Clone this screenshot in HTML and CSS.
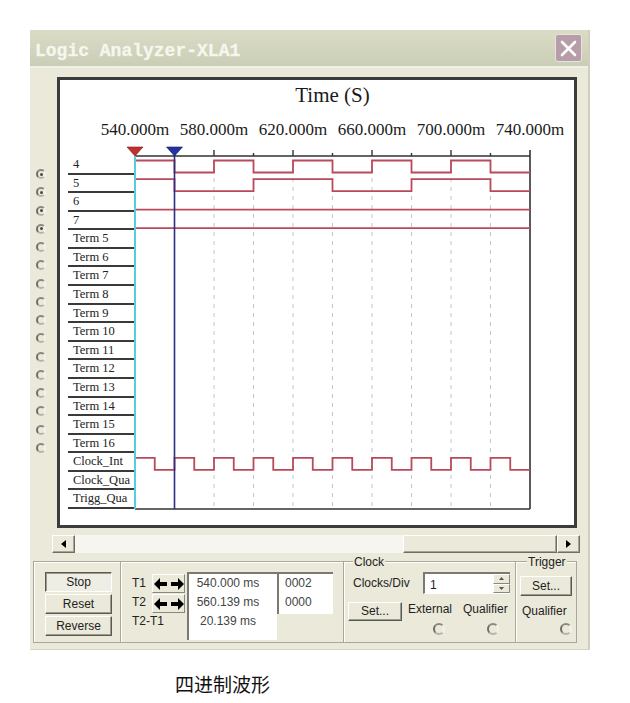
FILE: index.html
```html
<!DOCTYPE html>
<html>
<head>
<meta charset="utf-8">
<title>Logic Analyzer-XLA1</title>
<link rel="stylesheet" href="styles.css">
</head>
<body>
<div class="window">
  <div class="titlebar">
    <span class="title">Logic Analyzer-XLA1</span>
    <div class="close">
      <svg width="17" height="17" viewBox="0 0 17 17"><path d="M2 2 L15 15 M15 2 L2 15" stroke="#fff" stroke-width="2.6" stroke-linecap="round"/></svg>
    </div>
  </div>
  <div class="main">
    <div class="radios">
      <span class="radio on"></span><span class="radio on"></span><span class="radio on"></span><span class="radio on"></span>
      <span class="radio"></span><span class="radio"></span><span class="radio"></span><span class="radio"></span>
      <span class="radio"></span><span class="radio"></span><span class="radio"></span><span class="radio"></span>
      <span class="radio"></span><span class="radio"></span><span class="radio"></span><span class="radio"></span>
    </div>
    <div class="plot">
      <div class="plot-title">Time (S)</div>
      <div class="axis-labels">
        <span>540.000m</span><span>580.000m</span><span>620.000m</span><span>660.000m</span><span>700.000m</span><span>740.000m</span>
      </div>
      <div class="chart">
        <div class="labels">
          <div class="row">4</div><div class="row">5</div><div class="row">6</div><div class="row">7</div>
          <div class="row">Term 5</div><div class="row">Term 6</div><div class="row">Term 7</div><div class="row">Term 8</div>
          <div class="row">Term 9</div><div class="row">Term 10</div><div class="row">Term 11</div><div class="row">Term 12</div>
          <div class="row">Term 13</div><div class="row">Term 14</div><div class="row">Term 15</div><div class="row">Term 16</div>
          <div class="row">Clock_Int</div><div class="row">Clock_Qua</div><div class="row">Trigg_Qua</div>
        </div>
        <svg class="waves" width="439" height="372" viewBox="0 0 439 372">
          <g class="grid">
            <path d="M39.5 20 V369 M79 20 V369 M118.5 20 V369 M158 20 V369 M197.5 20 V369 M237 20 V369 M276.5 20 V369 M316 20 V369 M355.5 20 V369"/>
          </g>
          <g class="axis">
            <path d="M0 16 H395 M395 10 V369 M0 369 H395"/>
            <path class="tick" d="M79 10 V16 M158 10 V16 M237 10 V16 M316 10 V16 M39.5 13 V16 M118.5 13 V16 M197.5 13 V16 M276.5 13 V16 M355.5 13 V16"/>
          </g>
          <g class="sig">
            <path d="M0 20.5 H39.5 V32.5 H79 V20.5 H118.5 V32.5 H158 V20.5 H197.5 V32.5 H237 V20.5 H276.5 V32.5 H316 V20.5 H355.5 V32.5 H395"/>
            <path d="M0 39.1 H39.5 V51.1 H118.5 V39.1 H197.5 V51.1 H276.5 V39.1 H355.5 V51.1 H395"/>
            <path d="M0 69.7 H395"/>
            <path d="M0 88.2 H395"/>
            <path d="M0 317.8 H19.75 V329.8 H39.5 V317.8 H59.25 V329.8 H79 V317.8 H98.75 V329.8 H118.5 V317.8 H138.25 V329.8 H158 V317.8 H177.75 V329.8 H197.5 V317.8 H217.25 V329.8 H237 V317.8 H256.75 V329.8 H276.5 V317.8 H296.25 V329.8 H316 V317.8 H335.75 V329.8 H355.5 V317.8 H375.25 V329.8 H395"/>
          </g>
          <path class="t1" d="M0 16 V369"/>
          <path class="t2" d="M39.5 9 V369"/>
          <polygon class="tri1" points="-8,7 8,7 0,16"/>
          <polygon class="tri2" points="31.5,7 47.5,7 39.5,16"/>
        </svg>
      </div>
    </div>
  </div>
  <div class="hscroll">
    <div class="sbtn"><svg width="5" height="8" viewBox="0 0 5 8"><polygon points="5,0 5,8 0,4" fill="#000"/></svg></div>
    <div class="strack"></div>
    <div class="sthumb"></div>
    <div class="sbtn"><svg width="5" height="8" viewBox="0 0 5 8"><polygon points="0,0 0,8 5,4" fill="#000"/></svg></div>
  </div>
  <div class="controls">
    <div class="group g-buttons">
      <div class="btn pressed">Stop</div>
      <div class="btn">Reset</div>
      <div class="btn">Reverse</div>
    </div>
    <div class="group g-time">
      <div class="tlabels">
        <div class="trow">T1</div>
        <div class="trow">T2</div>
        <div class="trow">T2-T1</div>
      </div>
      <div class="tarrows">
        <div class="abtn"><svg width="30" height="12" viewBox="0 0 30 12"><polygon points="0,6 6,0 6,4 13,4 13,8 6,8 6,12"/><polygon points="30,6 24,0 24,4 17,4 17,8 24,8 24,12"/></svg></div>
        <div class="abtn"><svg width="30" height="12" viewBox="0 0 30 12"><polygon points="0,6 6,0 6,4 13,4 13,8 6,8 6,12"/><polygon points="30,6 24,0 24,4 17,4 17,8 24,8 24,12"/></svg></div>
      </div>
      <div class="tbox tbox1">
        <div class="trow">540.000 ms</div>
        <div class="trow">560.139 ms</div>
        <div class="trow">20.139 ms</div>
      </div>
      <div class="tbox tbox2">
        <div class="trow">0002</div>
        <div class="trow">0000</div>
      </div>
    </div>
    <div class="group g-clock">
      <span class="legend">Clock</span>
      <div class="clk-row">
        <span class="clk-label">Clocks/Div</span>
        <div class="spin">
          <span class="spin-val">1</span>
          <div class="spin-btns">
            <div class="sp"><svg width="5" height="3" viewBox="0 0 5 3"><polygon points="0,3 5,3 2.5,0" fill="#555"/></svg></div>
            <div class="sp"><svg width="5" height="3" viewBox="0 0 5 3"><polygon points="0,0 5,0 2.5,3" fill="#555"/></svg></div>
          </div>
        </div>
      </div>
      <div class="clk-row2">
        <div class="btn set">Set...</div>
        <div class="opt opt-ext">
          <span>External</span>
          <span class="radio big"></span>
        </div>
        <div class="opt opt-qual">
          <span>Qualifier</span>
          <span class="radio big"></span>
        </div>
      </div>
    </div>
    <div class="group g-trig">
      <span class="legend">Trigger</span>
      <div class="btn set trig-set">Set...</div>
      <span class="trig-q">Qualifier</span>
      <span class="radio big trig-radio"></span>
    </div>
  </div>
</div>
<div class="caption">四进制波形</div>
</body>
</html>
```
FILE: styles.css
```css
* { box-sizing: border-box; }

body {
  margin: 0;
  background: #ffffff;
  font-family: "Liberation Sans", Arial, sans-serif;
}

.window {
  width: 560px;
  height: 620px;
  margin: 30px 0 0 30px;
  background: #ebe9da;
  border-right: 2px solid #d0cebf;
  border-bottom: 1px solid #d6d4c6;
  display: flex;
  flex-direction: column;
}

.titlebar {
  height: 38px;
  flex: none;
  display: flex;
  align-items: center;
  justify-content: space-between;
  padding: 0 6px 0 5px;
  background: linear-gradient(#dadcc6, #cbceb6);
  border-bottom: 2px solid #f1f0e6;
}

.title {
  font-family: "Liberation Mono", "DejaVu Sans Mono", monospace;
  font-weight: 700;
  font-size: 18px;
  color: #f8f8f0;
  padding-top: 5px;
  -webkit-text-stroke: 0.5px #f3f3ea;
  text-shadow: 0 0 1px #bfc1a8;
}

.close {
  width: 27px;
  height: 28px;
  background: #b69da8;
  border: 1px solid #e9e2e4;
  border-radius: 3px;
  display: flex;
  align-items: center;
  justify-content: center;
}

.main {
  display: flex;
  padding-top: 9px;
}

.radios {
  width: 27px;
  padding: 88px 0 0 6px;
  display: grid;
  grid-auto-rows: 18.25px;
  align-content: start;
}

.radio {
  display: block;
  width: 10px;
  height: 10px;
  align-self: center;
  border-radius: 50%;
  border: 2px solid;
  border-color: #8a8a82 #f2f1ea #b4b4aa #6e6e66;
  position: relative;
}

.radio.on::after {
  content: "";
  position: absolute;
  left: 1.5px;
  top: 1.5px;
  width: 3px;
  height: 3px;
  border-radius: 50%;
  background: #4a4a4a;
}

.radio.big {
  width: 12px;
  height: 12px;
}

.plot {
  width: 520px;
  height: 451px;
  border: 3px solid #3c3c3c;
  background: #ffffff;
  font-family: "Liberation Serif", "Times New Roman", serif;
  color: #1a1a1a;
}

.plot-title {
  margin: 3px 0 0 75px;
  width: 395px;
  text-align: center;
  font-size: 21px;
  line-height: 24px;
}

.axis-labels {
  display: flex;
  margin: 13px 0 0 35.5px;
  font-size: 17px;
  line-height: 20px;
}

.axis-labels span {
  width: 79px;
  text-align: center;
  flex: none;
}

.chart {
  display: flex;
}

.labels {
  width: 75px;
  flex: none;
  padding: 16px 0 0 8px;
  display: grid;
  grid-template-rows: repeat(19, 18.58px);
}

.row {
  border-bottom: 2px solid #3a3a3a;
  font-size: 12.5px;
  line-height: 16.5px;
  padding-left: 5px;
  white-space: nowrap;
  overflow: hidden;
  color: #222;
}

.waves {
  overflow: visible;
  display: block;
}

.grid path {
  stroke: #c4c4c4;
  stroke-width: 1;
  stroke-dasharray: 4 5;
  fill: none;
}

.axis path {
  stroke: #333;
  stroke-width: 1.6;
  fill: none;
}

.axis .tick {
  stroke-width: 1.4;
}

.sig path {
  stroke: #b94a5a;
  stroke-width: 1.8;
  fill: none;
}

.t1 {
  stroke: #58cedd;
  stroke-width: 2;
  fill: none;
}

.t2 {
  stroke: #2d2d82;
  stroke-width: 1.6;
  fill: none;
}

.tri1 { fill: #c22f2f; stroke: #7a1c1c; stroke-width: 0.6; }
.tri2 { fill: #2432a6; stroke: #141c60; stroke-width: 0.6; }

.hscroll {
  display: flex;
  width: 528px;
  height: 18px;
  margin: 7px 0 0 22px;
}

.sbtn {
  width: 23px;
  flex: none;
  display: flex;
  align-items: center;
  justify-content: center;
  background: #ebe9da;
  border: 1px solid;
  border-color: #ffffff #6e6e66 #6e6e66 #ffffff;
  box-shadow: inset -1px -1px 0 #a6a496;
}

.strack {
  flex: 1;
  background: #f6f5ef;
}

.sthumb {
  width: 154px;
  flex: none;
  background: #ebe9da;
  border: 1px solid;
  border-color: #ffffff #6e6e66 #6e6e66 #ffffff;
  box-shadow: inset -1px -1px 0 #a6a496;
}

.controls {
  display: flex;
  width: 544px;
  height: 82px;
  margin: 8px 0 0 3px;
  font-size: 12px;
  color: #222;
}

.group {
  border: 1px solid #a9a797;
  border-right: none;
  box-shadow: inset 1px 1px 0 #ffffff;
}

.group:last-child {
  border-right: 1px solid #a9a797;
}

.g-buttons {
  width: 87px;
  padding: 10px 0 0 11px;
  display: flex;
  flex-direction: column;
  gap: 2px;
}

.btn {
  width: 67px;
  height: 20px;
  line-height: 18px;
  text-align: center;
  background: #ebe9da;
  border: 1px solid;
  border-color: #ffffff #5a5a54 #5a5a54 #ffffff;
  box-shadow: inset -1px -1px 0 #9d9b8e;
}

.btn.pressed {
  border-color: #5a5a54 #ffffff #ffffff #5a5a54;
  box-shadow: inset 1px 1px 0 #9d9b8e;
  background: #efeee4;
}

.g-time {
  width: 223px;
  padding: 10px 0 0 11px;
  display: flex;
  align-items: flex-start;
}

.tlabels {
  width: 20px;
  padding-top: 2px;
  white-space: nowrap;
}

.trow {
  height: 19px;
  line-height: 19px;
  white-space: nowrap;
}

.tarrows {
  width: 33px;
  padding-top: 2px;
  display: flex;
  flex-direction: column;
  gap: 1px;
}

.abtn {
  height: 19px;
  display: flex;
  align-items: center;
  justify-content: center;
  border: 1px solid;
  border-color: #ffffff #8a887c #8a887c #ffffff;
}

.abtn polygon { fill: #000; }

.tbox {
  background: #ffffff;
  border-top: 2px solid #7c7a70;
  border-left: 2px solid #7c7a70;
  color: #444;
}

.tbox1 {
  width: 90px;
  height: 68px;
  margin-left: 2px;
  text-align: center;
  padding-right: 10px;
}

.tbox2 {
  width: 56px;
  height: 42px;
  padding-left: 6px;
}

.legend {
  display: block;
  width: fit-content;
  margin-top: -7px;
  line-height: 14px;
  background: #ebe9da;
  padding: 0 1px;
}

.g-clock {
  width: 172px;
  padding-left: 9px;
}

.clk-row {
  display: flex;
  align-items: center;
  margin-top: 3px;
  height: 22px;
}

.clk-label {
  width: 70px;
  flex: none;
}

.spin {
  width: 87px;
  height: 22px;
  display: flex;
  background: #ffffff;
  border-top: 2px solid #7c7a70;
  border-left: 2px solid #7c7a70;
  border-bottom: 1px solid #ffffff;
}

.spin-val {
  flex: 1;
  padding: 4px 0 0 5px;
  line-height: 14px;
}

.spin-btns {
  width: 17px;
  display: flex;
  flex-direction: column;
}

.sp {
  flex: 1;
  display: flex;
  align-items: center;
  justify-content: center;
  background: #ebe9da;
  border: 1px solid;
  border-color: #ffffff #8a887c #8a887c #ffffff;
}

.clk-row2 {
  display: flex;
  margin-top: 8px;
  align-items: flex-start;
}

.btn.set {
  width: 54px;
  height: 19px;
  line-height: 17px;
  margin-left: -5px;
}

.opt {
  display: flex;
  flex-direction: column;
  line-height: 14px;
  white-space: nowrap;
}

.opt .radio { margin-top: 7px; }

.opt-ext { width: 55px; margin-left: 6px; }
.opt-ext .radio { margin-left: 6px; }
.opt-qual { width: 50px; }
.opt-qual .radio { margin-left: 9px; }

.g-trig {
  width: 62px;
  display: flex;
  flex-direction: column;
  align-items: flex-start;
}

.g-trig .legend {
  margin-left: 11px;
}

.btn.trig-set {
  width: 52px;
  height: 20px;
  line-height: 18px;
  margin: 7px 0 0 4px;
}

.trig-q {
  margin: 8px 0 0 6px;
  line-height: 14px;
}

.trig-radio {
  margin: 5px 0 0 39px;
}

.caption {
  margin: 22px 0 0 175px;
  font-family: "Noto Sans CJK SC", "Noto Sans", sans-serif;
  font-size: 19px;
  line-height: 24px;
  color: #111;
}
```
